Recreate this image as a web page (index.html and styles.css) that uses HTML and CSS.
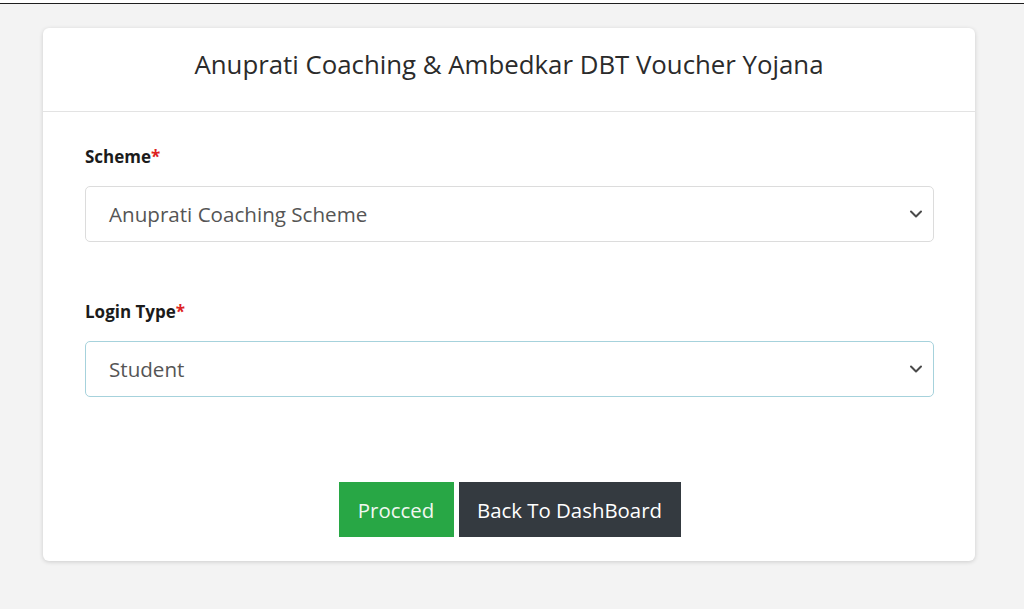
FILE: index.html
```html
<!DOCTYPE html>
<html lang="en">
<head>
<meta charset="utf-8">
<title>Anuprati Coaching &amp; Ambedkar DBT Voucher Yojana</title>
<link rel="stylesheet" href="styles.css">
</head>
<body>
<div class="topbar"></div>
<main class="page">
  <section class="card">
    <header class="card-header">Anuprati Coaching &amp; Ambedkar DBT Voucher Yojana</header>
    <div class="card-body">
      <div class="field">
        <label class="label">Scheme<span class="req">*</span></label>
        <div class="select">
          <span class="value">Anuprati Coaching Scheme</span>
          <svg class="chev" width="14" height="10" viewBox="0 0 14 10"><path d="M2 2.5l5 5 5-5" fill="none" stroke="#4a4a4a" stroke-width="2" stroke-linecap="round" stroke-linejoin="round"/></svg>
        </div>
      </div>
      <div class="field field-second">
        <label class="label">Login Type<span class="req">*</span></label>
        <div class="select select-focus">
          <span class="value">Student</span>
          <svg class="chev" width="14" height="10" viewBox="0 0 14 10"><path d="M2 2.5l5 5 5-5" fill="none" stroke="#4a4a4a" stroke-width="2" stroke-linecap="round" stroke-linejoin="round"/></svg>
        </div>
      </div>
      <div class="actions">
        <button class="btn btn-green">Procced</button>
        <button class="btn btn-dark">Back To DashBoard</button>
      </div>
    </div>
  </section>
</main>
</body>
</html>
```
FILE: styles.css
```css
* { box-sizing: border-box; }
html, body { margin: 0; padding: 0; }
body {
  background: #f3f3f3;
  font-family: "Open Sans", "Noto Sans", sans-serif;
  color: #222;
  height: 609px;
  overflow: hidden;
}
.topbar {
  height: 4px;
  background: #ffffff;
  border-bottom: 1px solid #1e1e1e;
}
.page {
  padding: 24px 0 0 43px;
}
.card {
  width: 932px;
  background: #fff;
  border-radius: 6px;
  box-shadow: 0 1px 4px rgba(0,0,0,0.16);
}
.card-header {
  height: 84px;
  border-bottom: 1px solid #e3e3e3;
  display: flex;
  align-items: center;
  justify-content: center;
  font-size: 25.8px;
  color: #2b2b2b;
  padding-bottom: 12px;
}
.card-body {
  padding: 33px 41px 24px 42px;
}
.field {
  display: flex;
  flex-direction: column;
}
.field-second {
  margin-top: 58px;
}
.label {
  font-size: 17px;
  font-weight: 700;
  color: #1b1b1b;
  line-height: 24px;
  margin-bottom: 17px;
}
.req { color: #d22; }
.select {
  height: 56px;
  border: 1px solid #dcdcdc;
  border-radius: 5px;
  display: flex;
  align-items: center;
  justify-content: space-between;
  padding: 0 10px 0 23px;
}
.select-focus {
  border-color: #a6d2dc;
}
.value {
  font-size: 20.6px;
  color: #555;
}
.chev { display: block; }
.actions {
  margin-top: 85px;
  display: flex;
  justify-content: center;
  gap: 5px;
}
.btn {
  height: 55px;
  border: 0;
  border-radius: 0;
  font-family: inherit;
  font-size: 20.4px;
  color: #f1f7f1;
  padding: 0;
}
.btn-green { background: #28a745; width: 115px; }
.btn-dark { background: #343a40; width: 222px; color: #fff; }
```
